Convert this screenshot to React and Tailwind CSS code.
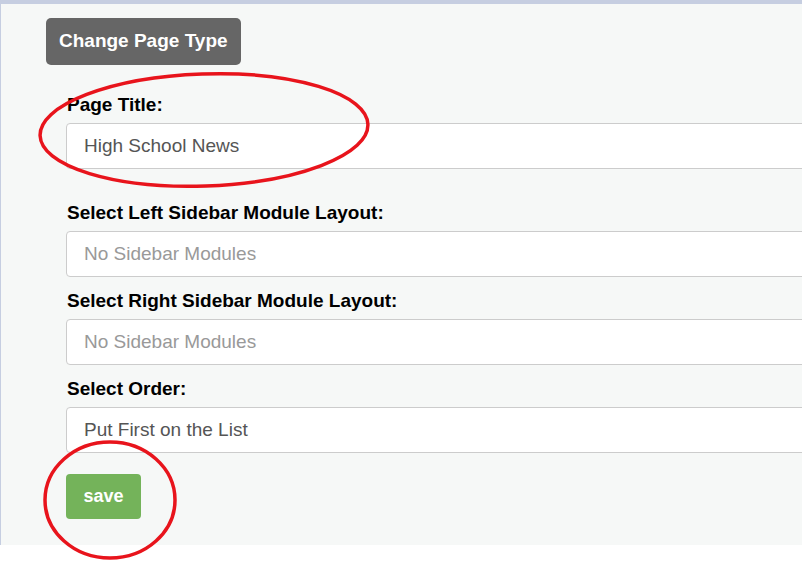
import React from "react";

const FIELDS = [
  { label: "Left", placeholder: "No Sidebar Modules" },
  { label: "Right", placeholder: "No Sidebar Modules" },
];

function Field({ label, value, placeholder, className = "" }) {
  return (
    <div className={className}>
      <label className="block pl-[1px] text-[19px] leading-[24px] font-bold text-black mb-[6px]">
        {label}
      </label>
      <div className="w-[780px] h-[46px] bg-white border border-[#cccccc] rounded-[4px] flex items-center pl-[17px] text-[19px]">
        {value ? (
          <span className="text-[#555555]">{value}</span>
        ) : (
          <span className="text-[#999999]">{placeholder}</span>
        )}
      </div>
    </div>
  );
}

export default function App() {
  return (
    <div
      className="relative w-[802px] h-[562px] overflow-hidden bg-white"
      style={{ fontFamily: '"Liberation Sans", Arial, sans-serif' }}
    >
      <div className="h-[4px] bg-[#c6cee1]" />

      <div className="bg-[#f6f8f7] border-l border-[#c6cee1] pl-[45px] pt-[14px] pb-[26px]">
        <button className="h-[47px] px-[13px] bg-[#666666] text-white font-bold text-[19px] rounded-[5px]">
          Change Page Type
        </button>

        <div className="pl-[20px]">
          <Field className="mt-[28px]" label="Page Title:" value="High School News" />

          {FIELDS.map((f, i) => (
            <Field
              key={f.label}
              className={i === 0 ? "mt-[32px]" : "mt-[12px]"}
              label={`Select ${f.label} Sidebar Module Layout:`}
              placeholder={f.placeholder}
            />
          ))}

          <Field className="mt-[12px]" label="Select Order:" value="Put First on the List" />

          <button className="mt-[21px] w-[75px] h-[45px] bg-[#74b35a] text-white font-bold text-[18px] rounded-[4px]">
            save
          </button>
        </div>
      </div>

      {/* red annotation circles */}
      <svg className="absolute inset-0 pointer-events-none" width="802" height="562">
        <ellipse cx="204" cy="130" rx="164" ry="56" fill="none" stroke="#e8141c" strokeWidth="3.5" transform="rotate(-2 204 130)" />
        <ellipse cx="110" cy="500" rx="65" ry="58" fill="none" stroke="#e8141c" strokeWidth="3.5" />
      </svg>
    </div>
  );
}
